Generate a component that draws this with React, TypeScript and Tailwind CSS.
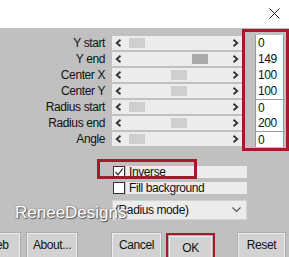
import React from "react";

const rows = [
  { label: "Y start", value: "0", thumb: 17, active: false, top: false },
  { label: "Y end", value: "149", thumb: 80, active: true, top: false },
  { label: "Center X", value: "100", thumb: 59, active: false, top: false },
  { label: "Center Y", value: "100", thumb: 59, active: false, top: false },
  { label: "Radius start", value: "0", thumb: 17, active: false, top: true },
  { label: "Radius end", value: "200", thumb: 59, active: false, top: false },
  { label: "Angle", value: "0", thumb: 17, active: false, top: true },
];

function Chevron({ dir }: { dir: "left" | "right" }) {
  return (
    <svg width="7" height="8" viewBox="0 0 7 8" className="shrink-0">
      <path
        d={dir === "left" ? "M5.5 0.8 L1.8 4 L5.5 7.2" : "M1.5 0.8 L5.2 4 L1.5 7.2"}
        fill="none"
        stroke="#3a3a3a"
        strokeWidth="2"
      />
    </svg>
  );
}

function Slider({ thumb, active }: { thumb: number; active: boolean }) {
  return (
    <div className="relative flex h-[14px] w-[130px] items-center justify-between bg-[#ececec] px-[3px]">
      <Chevron dir="left" />
      <div
        className={`absolute top-[2px] h-[10px] w-[16px] ${active ? "bg-[#a9a9a9]" : "bg-[#cfcfcf]"}`}
        style={{ left: thumb }}
      />
      <Chevron dir="right" />
    </div>
  );
}

function Checkbox({ checked }: { checked: boolean }) {
  return (
    <div className="flex h-[12px] w-[12px] shrink-0 items-center justify-center border border-[#333] bg-white">
      {checked && (
        <svg width="10" height="10" viewBox="0 0 10 10">
          <path d="M1.5 5 L4 7.8 L8.8 1.5" fill="none" stroke="#222" strokeWidth="1.2" />
        </svg>
      )}
    </div>
  );
}

function Btn({ children, w }: { children: React.ReactNode; w: string }) {
  return (
    <div
      className={`flex h-[26px] ${w} shrink-0 items-start justify-center border border-[#ededed] bg-[#d2d2d2] pt-[4px] shadow-[0_0_0_1px_#aeaeae]`}
    >
      {children}
    </div>
  );
}

export default function App() {
  return (
    <div
      className="relative h-[257px] w-[289px] overflow-hidden bg-[#c0c0c0] text-[12px] leading-[14px] tracking-[-0.4px] text-[#111]"
      style={{ fontFamily: '"Liberation Sans", Arial, sans-serif' }}
    >
      {/* Title strip */}
      <div className="flex h-[28px] items-start justify-end bg-white pr-[9px] pt-[8px]">
        <svg width="11" height="11" viewBox="0 0 11 11">
          <path d="M0.5 0.5 L10.5 10.5 M10.5 0.5 L0.5 10.5" stroke="#222" strokeWidth="1" />
        </svg>
      </div>

      {/* Sliders and values */}
      <div className="flex items-start">
        <div className="mt-[7px] flex w-[242px] flex-col">
          {rows.map((r) => (
            <div key={r.label} className="flex h-[16px] items-center gap-[7px]">
              <div className="w-[105px] text-right">{r.label}</div>
              <Slider thumb={r.thumb} active={r.active} />
            </div>
          ))}
        </div>
        <div className="mt-[1px] flex h-[122px] w-[47px] border-[3px] border-[#a31a2d] pt-[3px] pl-[10px]">
          <div className="flex flex-col">
            {rows.map((r) => (
              <div
                key={r.label}
                className={`h-[16px] w-[29px] border-x border-[#9a9a9a] bg-white pl-[2px] pt-[1px] ${r.top ? "border-t" : ""}`}
              >
                {r.value}
              </div>
            ))}
          </div>
        </div>
      </div>

      {/* Options */}
      <div className="relative mt-[14px] flex flex-col gap-[3px] pl-[113px]">
        <div className="absolute left-[97px] top-[-6px] h-[20px] w-[100px] border-[3px] border-[#a31a2d]" />
        <div className="flex h-[13px] items-center">
          <Checkbox checked />
          <div className="ml-[1px] h-[12px] w-[121px] bg-[#ececec] pl-[3px] leading-[12px]">Inverse</div>
        </div>
        <div className="flex h-[13px] items-center">
          <Checkbox checked={false} />
          <div className="ml-[1px] h-[12px] w-[121px] bg-[#ececec] pl-[3px] leading-[12px]">Fill background</div>
        </div>
      </div>

      <div className="ml-[112px] mt-[6px] flex h-[20px] w-[135px] items-center justify-between border border-[#d2d2d2] bg-[#ececec] pl-[2px] pr-[5px]">
        <span>(Radius mode)</span>
        <svg width="9" height="6" viewBox="0 0 9 6">
          <path d="M0.5 0.5 L4.5 4.5 L8.5 0.5" fill="none" stroke="#555" strokeWidth="1.2" />
        </svg>
      </div>

      {/* Watermark */}
      <div className="absolute left-[15px] top-[204px] text-[17px] leading-[17px] tracking-normal text-white [text-shadow:1px_1px_1px_#555,0_0_2px_#777]">
        ReneeDesigns
      </div>

      {/* Buttons */}
      <div className="mt-[13px] flex items-start">
        <div className="ml-[-26px]">
          <Btn w="w-[46px]">Web</Btn>
        </div>
        <div className="ml-[7px]">
          <Btn w="w-[50px]">About...</Btn>
        </div>
        <div className="ml-[35px]">
          <Btn w="w-[49px]">Cancel</Btn>
        </div>
        <div className="ml-[5px] border-[3px] border-[#a31a2d]">
          <Btn w="w-[43px]">OK</Btn>
        </div>
        <div className="ml-[23px]">
          <Btn w="w-[47px]">Reset</Btn>
        </div>
      </div>
    </div>
  );
}
